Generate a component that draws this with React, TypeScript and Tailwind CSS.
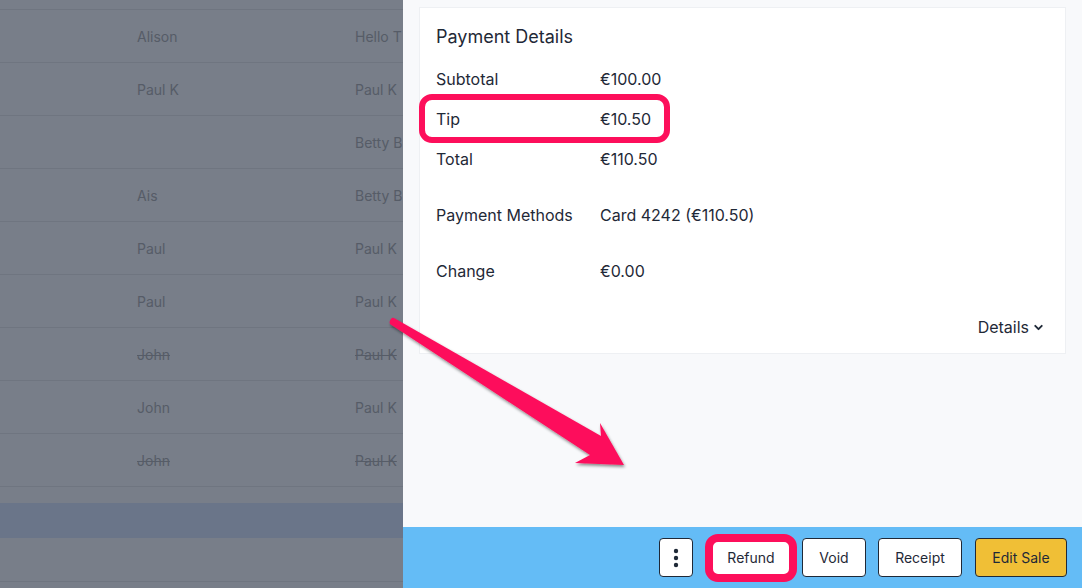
import { ChevronDown } from "lucide-react";

interface IRow {
    name: string;
    staff: string;
    struck?: boolean;
}

const rows: IRow[] = [
    { name: "Alison", staff: "Hello T" },
    { name: "Paul K", staff: "Paul K" },
    { name: "", staff: "Betty B" },
    { name: "Ais", staff: "Betty B" },
    { name: "Paul", staff: "Paul K" },
    { name: "Paul", staff: "Paul K" },
    { name: "John", staff: "Paul K", struck: true },
    { name: "John", staff: "Paul K" },
    { name: "John", staff: "Paul K", struck: true },
];

const SalesTable = () => {
    return (
        <div className="w-[403px] shrink-0 overflow-hidden bg-[#787e89] text-[14px] text-[#565c67]">
            <div className="h-[10px] border-b border-[#6f7580]" />
            {rows.map((row, i) => (
                <div key={i} className="flex h-[53px] items-center border-b border-[#6f7580] whitespace-nowrap">
                    <span className={`ml-[137px] w-[218px] ${row.struck ? "line-through" : ""}`}>{row.name}</span>
                    <span className={row.struck ? "line-through" : ""}>{row.staff}</span>
                </div>
            ))}
            <div className="h-[16px]" />
            <div className="h-[35px] bg-[#6a7589]" />
            <div className="h-[44px] border-b border-[#6f7580]" />
        </div>
    );
};

const DetailRow = ({ label, value }: { label: string; value: string }) => {
    return (
        <div className="flex h-[40px] items-center">
            <span className="w-[164px]">{label}</span>
            <span>{value}</span>
        </div>
    );
};

const Arrow = () => {
    return (
        <svg className="pointer-events-none absolute left-0 top-0" width="1082" height="588">
            <defs>
                <filter id="shadow" x="-10%" y="-10%" width="130%" height="130%">
                    <feDropShadow dx="1" dy="2" stdDeviation="1.5" floodColor="#000" floodOpacity="0.45" />
                </filter>
            </defs>
            <path
                d="M391 319 Q392 317 394 318 L601 436 L600 423 L624 465 L575 463 L590 455 L390 324 Q389 321 391 319 Z"
                fill="#fd0f5b"
                filter="url(#shadow)"
            />
        </svg>
    );
};

const App = () => {
    return (
        <div className="relative flex h-[588px] w-[1082px] overflow-hidden font-['Inter',sans-serif]">
            <SalesTable />
            <div className="flex flex-1 flex-col bg-[#f8f9fb] text-[#1f2937]">
                <div className="flex-1 px-[16px] pt-[7px]">
                    <div className="border border-[#eef0f3] bg-white px-[16px] pb-[6px] pt-[15px] text-[16px]">
                        <div className="h-[28px] text-[18px] leading-[28px]">Payment Details</div>
                        <div className="mt-[8px]">
                            <DetailRow label="Subtotal" value="€100.00" />
                            <div className="relative">
                                <DetailRow label="Tip" value="€10.50" />
                                <div className="absolute left-[-17px] top-[-5px] h-[49px] w-[251px] rounded-[13px] border-[6px] border-[#fd0f5b]" />
                            </div>
                            <DetailRow label="Total" value="€110.50" />
                            <div className="mt-[16px]">
                                <DetailRow label="Payment Methods" value="Card 4242 (€110.50)" />
                            </div>
                            <div className="mt-[16px]">
                                <DetailRow label="Change" value="€0.00" />
                            </div>
                            <div className="mt-[16px] flex h-[40px] items-center justify-end pr-[4px]">
                                <span>Details</span>
                                <ChevronDown className="ml-[3px] h-[13px] w-[13px]" strokeWidth={3.5} />
                            </div>
                        </div>
                    </div>
                </div>
                <div className="flex h-[61px] items-center justify-end bg-[#64bcf6] pr-[15px] text-[14px]">
                    <button className="flex h-[39px] w-[34px] items-center justify-center rounded-[4px] border border-[#1f2937] bg-white">
                        <svg width="6" height="20" viewBox="0 0 6 20">
                            <circle cx="3" cy="3" r="2.2" fill="#1f2937" />
                            <circle cx="3" cy="10" r="2.2" fill="#1f2937" />
                            <circle cx="3" cy="17" r="2.2" fill="#1f2937" />
                        </svg>
                    </button>
                    <div className="ml-[12px] flex h-[48px] w-[92px] items-center justify-center rounded-[13px] border-[8px] border-[#fd0f5b] bg-white">
                        Refund
                    </div>
                    <button className="ml-[5px] h-[39px] w-[64px] rounded-[4px] border border-[#1f2937] bg-white">Void</button>
                    <button className="ml-[12px] h-[39px] w-[84px] rounded-[4px] border border-[#1f2937] bg-white">Receipt</button>
                    <button className="ml-[13px] h-[39px] w-[92px] rounded-[4px] border border-[#1f2937] bg-[#f0bf36]">Edit Sale</button>
                </div>
            </div>
            <Arrow />
        </div>
    );
};

export default App;
